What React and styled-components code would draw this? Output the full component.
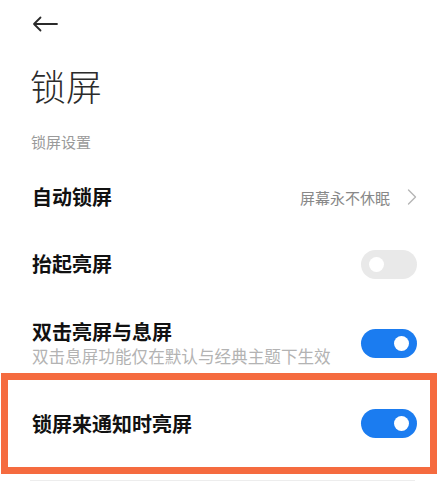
import React from "react";
import styled, { createGlobalStyle } from "styled-components";

const GlobalStyle = createGlobalStyle`
    body {
        margin: 0;
        background: #ffffff;
        font-family: "Noto Sans CJK SC", "Noto Sans", sans-serif;
    }
`;

const Page = styled.div`
    width: 440px;
    height: 498px;
    overflow: hidden;
    background: #ffffff;
`;

const Header = styled.div`
    height: 48px;
    display: flex;
    align-items: center;
    padding-left: 32px;
`;

const Title = styled.h1`
    margin: 12px 0 0 30px;
    font-size: 36px;
    line-height: 50px;
    font-weight: 300;
    color: #2b2b2b;
`;

const SectionLabel = styled.div`
    margin: 22px 0 0 31px;
    font-size: 15px;
    line-height: 20px;
    color: #9a9a9a;
`;

const Row = styled.div`
    display: flex;
    align-items: center;
    justify-content: space-between;
    min-height: ${(p) => p.$height || 66}px;
    padding: ${(p) => p.$pad || "0"};
    padding-left: 32px;
    padding-right: 23px;
    box-sizing: border-box;
`;

const Highlight = styled.div`
    margin: 0 3px 0 1px;
    border: 7px solid #f56b3f;
    height: 101px;
    box-sizing: border-box;
    display: flex;
    align-items: center;

    & > ${Row} {
        flex: 1;
        padding-left: 24px;
        padding-right: 13px;
    }
`;

const TextBlock = styled.div`
    display: flex;
    flex-direction: column;
`;

const RowTitle = styled.div`
    font-size: 20px;
    line-height: 26px;
    font-weight: 600;
    color: #111111;
`;

const RowSub = styled.div`
    font-size: 16.6px;
    line-height: 22px;
    color: #b3b3b3;
`;

const Value = styled.div`
    display: flex;
    align-items: center;
    gap: 17px;
    font-size: 15px;
    color: #888888;
`;

const Toggle = styled.div`
    width: 56px;
    height: 29px;
    border-radius: 15px;
    background: ${(p) => (p.$on ? "#1b7cf0" : "#e9e9e9")};
    display: flex;
    align-items: center;
    justify-content: ${(p) => (p.$on ? "flex-end" : "flex-start")};
    padding: 0 8px;
    box-sizing: border-box;
    flex-shrink: 0;

    &::after {
        content: "";
        width: 15px;
        height: 15px;
        border-radius: 50%;
        background: #ffffff;
    }
`;

const Divider = styled.div`
    margin: 6px 25px 0 30px;
    height: 1px;
    background: #ededed;
`;

function BackArrow() {
    return (
        <svg width="26" height="16" viewBox="0 0 26 16" fill="none">
            <path d="M25 8H2M8.5 1.5L2 8l6.5 6.5" stroke="#2a2a2a" strokeWidth="1.8" strokeLinecap="round" strokeLinejoin="round" />
        </svg>
    );
}

function Chevron() {
    return (
        <svg width="10" height="16" viewBox="0 0 10 16" fill="none">
            <path d="M1.5 1l7 7-7 7" stroke="#b5b5b5" strokeWidth="1.4" strokeLinecap="round" strokeLinejoin="round" />
        </svg>
    );
}

export default function App() {
    return (
        <Page>
            <GlobalStyle />
            <Header>
                <BackArrow />
            </Header>
            <Title>锁屏</Title>
            <SectionLabel>锁屏设置</SectionLabel>
            <Row style={{ marginTop: 12 }}>
                <RowTitle>自动锁屏</RowTitle>
                <Value>
                    屏幕永不休眠
                    <Chevron />
                </Value>
            </Row>
            <Row style={{ marginTop: 1 }}>
                <RowTitle>抬起亮屏</RowTitle>
                <Toggle />
            </Row>
            <Row $height={76} $pad="20px 0 4px">
                <TextBlock>
                    <RowTitle>双击亮屏与息屏</RowTitle>
                    <RowSub>双击息屏功能仅在默认与经典主题下生效</RowSub>
                </TextBlock>
                <Toggle $on />
            </Row>
            <Highlight>
                <Row>
                    <RowTitle>锁屏来通知时亮屏</RowTitle>
                    <Toggle $on />
                </Row>
            </Highlight>
            <Divider />
        </Page>
    );
}
